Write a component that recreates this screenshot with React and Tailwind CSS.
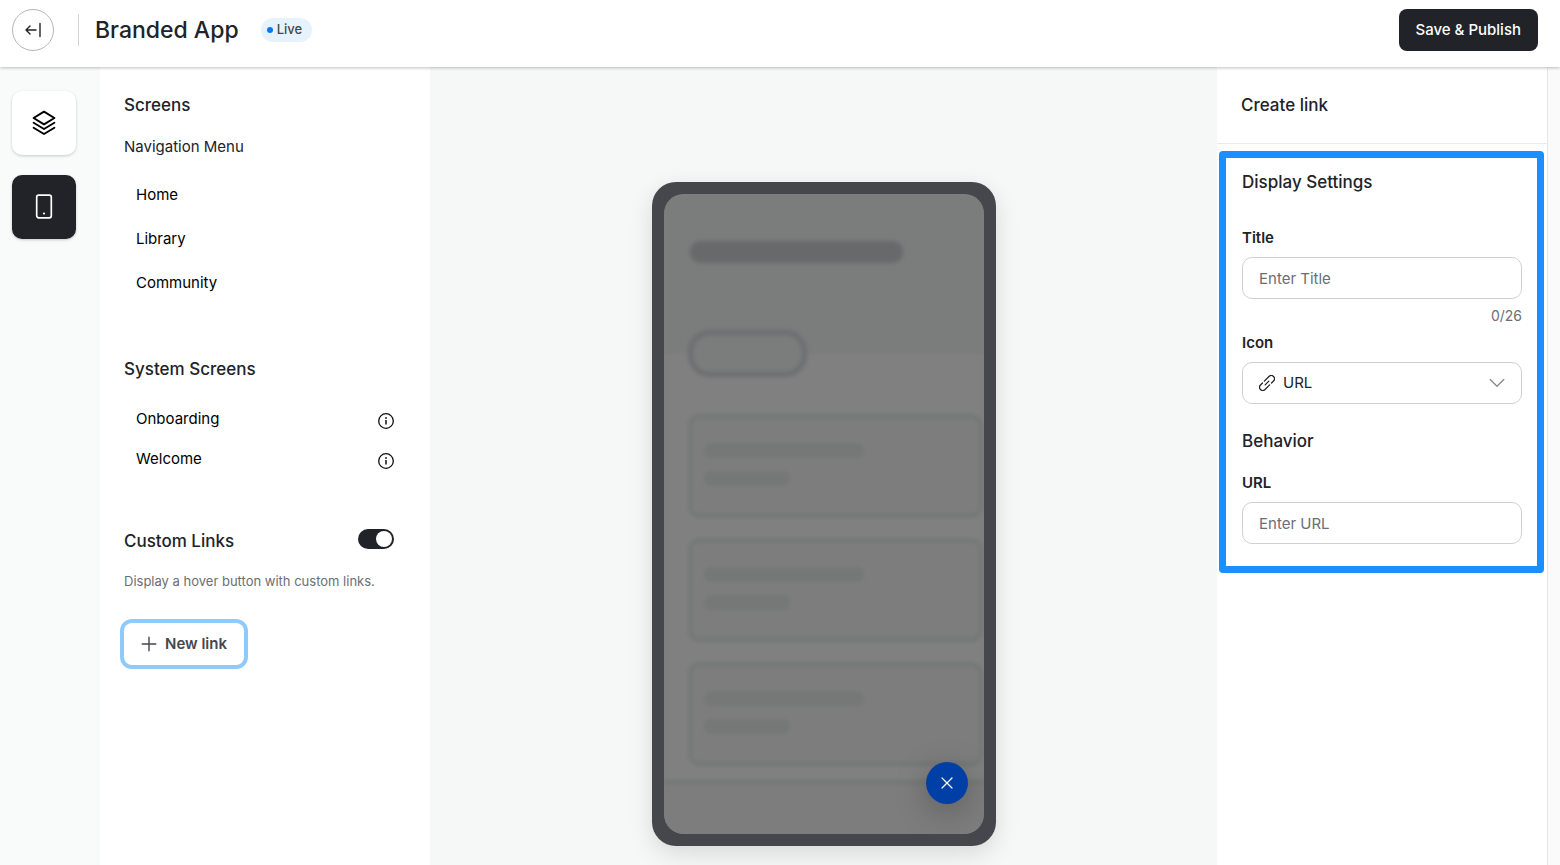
import { useState } from "react";

function ExitIcon() {
  return (
    <svg width="18" height="18" viewBox="0 0 18 18" fill="none" stroke="#212328" strokeWidth="1.4" strokeLinecap="round" strokeLinejoin="round" aria-hidden="true">
      <path d="M12 9H2M6 5 2 9l4 4M16 2.5v13" />
    </svg>
  );
}

function LayersIcon() {
  return (
    <svg width="24" height="26" viewBox="0 0 24 26" fill="none" stroke="#000" strokeWidth="1.9" strokeLinecap="round" strokeLinejoin="round" aria-hidden="true">
      <path d="M12 1.6 22.4 8 12 14.4 1.6 8Z" />
      <path d="M1.6 12.7 12 19l10.4-6.3" />
      <path d="M1.6 17.7 12 24l10.4-6.3" />
    </svg>
  );
}

function PhoneIcon() {
  return (
    <svg width="18" height="26" viewBox="0 0 18 26" fill="none" aria-hidden="true">
      <rect x="1.7" y="1.2" width="14.6" height="22.6" rx="2" stroke="#fff" strokeWidth="1.7" />
      <circle cx="9" cy="19.5" r="1.1" fill="#fff" />
    </svg>
  );
}

function InfoIcon() {
  return (
    <svg width="16" height="16" viewBox="0 0 16 16" fill="none" aria-hidden="true">
      <circle cx="8" cy="8" r="7.3" stroke="#111" strokeWidth="1.3" />
      <path d="M8 7v4.6" stroke="#111" strokeWidth="1.5" />
      <circle cx="8" cy="5" r="0.9" fill="#111" />
    </svg>
  );
}

function PlusIcon() {
  return (
    <svg width="16" height="16" viewBox="0 0 16 16" fill="none" stroke="#45474d" strokeWidth="1.4" strokeLinecap="round" aria-hidden="true">
      <path d="M8 1.2v13.6M1.2 8h13.6" />
    </svg>
  );
}

function LinkIcon() {
  return (
    <svg width="16" height="16" viewBox="0 0 16 16" fill="none" stroke="#212328" strokeWidth="1.3" strokeLinecap="round" strokeLinejoin="round" aria-hidden="true">
      <g transform="translate(8 8) rotate(-45)">
        <path d="M-0.600 -3.200H6a3.200 3.200 0 0 1 0 6.400H3.200" />
        <path d="M0.600 3.200H-6a3.200 3.200 0 0 1 0-6.400H-3.200" />
        <path d="M-2.600 0H2.600" />
      </g>
    </svg>
  );
}

function ChevronIcon() {
  return (
    <svg width="16" height="10" viewBox="0 0 16 10" fill="none" stroke="#868a90" strokeWidth="1.3" strokeLinecap="round" strokeLinejoin="round" aria-hidden="true">
      <path d="M1.2 1.5 8 8.3l6.8-6.8" />
    </svg>
  );
}

function CloseIcon() {
  return (
    <svg width="12" height="12" viewBox="0 0 12 12" fill="none" stroke="#fff" strokeWidth="1.2" strokeLinecap="round" aria-hidden="true">
      <path d="M1 1l10 10M11 1 1 11" />
    </svg>
  );
}

function SectionTitle({ children }) {
  return <h2 className="text-[17px] leading-6 font-medium">{children}</h2>;
}

function Header() {
  return (
    <header className="relative z-10 flex h-[67px] shrink-0 items-start justify-between bg-white pt-[9px] pr-[22px] pl-3 shadow-[0_1px_3px_rgba(0,0,0,0.25)]">
      <div className="flex items-center">
        <button type="button" aria-label="Back" className="flex size-[42px] items-center justify-center rounded-full border border-[#b3b6bf]">
          <ExitIcon />
        </button>
        <span className="ml-6 h-8 w-px bg-[#d0d2d6]" />
        <h1 className="ml-4 text-[23px] leading-8 font-medium">Branded App</h1>
        <span className="ml-[22px] flex h-6 items-center gap-1 rounded-full bg-[#e6f3fd] pr-[10px] pl-[6px] text-[13px] font-medium text-[#45474d]">
          <span className="size-[6px] rounded-full bg-[#0a78f5]" />
          Live
        </span>
      </div>
      <button type="button" className="h-[42px] rounded-lg bg-[#212328] px-[17px] text-[15px] font-medium text-white">
        Save &amp; Publish
      </button>
    </header>
  );
}

function Rail() {
  return (
    <nav aria-label="Sections" className="flex w-[100px] shrink-0 flex-col gap-5 bg-[#f9fbfa] pt-6 pl-3">
      <button type="button" aria-label="Layers" className="flex size-16 items-center justify-center rounded-[10px] bg-white shadow-[0_1px_3px_rgba(0,0,0,0.2)]">
        <LayersIcon />
      </button>
      <button type="button" aria-label="App" className="flex size-16 items-center justify-center rounded-[10px] bg-[#212328] shadow-[0_1px_3px_rgba(0,0,0,0.2)]">
        <PhoneIcon />
      </button>
    </nav>
  );
}

function ScreensPanel() {
  const [enabled, setEnabled] = useState(true);
  return (
    <aside className="flex w-[330px] shrink-0 flex-col items-stretch bg-white px-6 pt-[26px]">
      <SectionTitle>Screens</SectionTitle>
      <h3 className="mt-[18px] text-[15px] leading-6">Navigation Menu</h3>
      <ul className="mt-[14px]">
        {["Home", "Library", "Community"].map((name) => (
          <li key={name} className="flex h-11 items-center px-3">
            <a href="#" className="text-[15px] text-black">{name}</a>
          </li>
        ))}
      </ul>
      <div className="mt-[52px]">
        <SectionTitle>System Screens</SectionTitle>
      </div>
      <ul className="mt-[18px]">
        {["Onboarding", "Welcome"].map((name) => (
          <li key={name} className="flex h-10 items-center justify-between px-3">
            <a href="#" className="text-[15px] text-black">{name}</a>
            <button type="button" aria-label={`About ${name}`} className="mt-1">
              <InfoIcon />
            </button>
          </li>
        ))}
      </ul>
      <div className="mt-[50px] flex items-start justify-between pr-3">
        <SectionTitle>Custom Links</SectionTitle>
        <button
          type="button"
          role="switch"
          aria-checked={enabled}
          aria-label="Custom Links"
          onClick={() => setEnabled(!enabled)}
          className={`flex h-5 w-9 items-center rounded-full p-[2px] ${enabled ? "justify-end bg-[#212328]" : "justify-start bg-[#b3b6bf]"}`}
        >
          <span className="size-4 rounded-full bg-white" />
        </button>
      </div>
      <p className="mt-[18px] text-[13px] leading-5 text-[#6b6e75]">Display a hover button with custom links.</p>
      <button type="button" className="mt-8 flex h-[42px] items-center gap-2 self-start rounded-lg bg-white px-[17px] text-[15px] font-semibold text-[#45474d] ring-4 ring-[#8fcafc]">
        <PlusIcon />
        New link
      </button>
    </aside>
  );
}

function SkeletonCard() {
  return (
    <div className="flex h-[104px] flex-col gap-[13px] rounded-xl border-4 border-[#747776] bg-[#7d7d7d] pt-[25px] pl-3">
      <div className="h-[15px] w-40 rounded-md bg-[#757877]" />
      <div className="h-[15px] w-[86px] rounded-md bg-[#757877]" />
    </div>
  );
}

function Preview() {
  return (
    <main className="flex min-w-0 flex-1 items-start justify-center bg-[#f5f8f7] pt-[115px] pb-[19px]">
      <div className="rounded-3xl bg-[#45474d] p-3 shadow-[0_8px_24px_rgba(0,0,0,0.12)]">
        <div className="relative h-[640px] w-80 overflow-hidden rounded-[20px] bg-[#7e7e7e]">
          <div className="flex h-full flex-col bg-[#808080] blur-[2px]">
            <div className="h-40 shrink-0 bg-[#7b7d7c] pt-[47px] pl-6">
              <div className="ml-[2px] h-[22px] w-[213px] rounded-[10px] bg-[#68696b]" />
              <div className="mt-[67px] h-[47px] w-[119px] rounded-[22px] border-[5px] border-[#6c6d70] bg-[#7b7d7c]" />
            </div>
            <div className="mt-[60px] flex flex-col gap-5 pr-px pl-6">
              <SkeletonCard />
              <SkeletonCard />
              <SkeletonCard />
            </div>
            <div className="mt-[14px] flex-1 border-t-4 border-[#747776] bg-[#7d7d7d]" />
          </div>
          <button type="button" aria-label="Close" className="absolute right-4 bottom-[30px] flex size-[42px] items-center justify-center rounded-full bg-[#003fa5] shadow-[0_8px_32px_rgba(0,0,0,0.25)]">
            <CloseIcon />
          </button>
        </div>
      </div>
    </main>
  );
}

const fieldClass =
  "mt-[7px] h-[42px] w-full rounded-[10px] border border-[#cfd1d5] bg-white px-4 text-[15px] placeholder:text-[#6b6e75]";
const labelClass = "block text-[15px] leading-6 font-semibold";

function LinkPanel() {
  const [title, setTitle] = useState("");
  const [url, setUrl] = useState("");
  return (
    <aside className="w-[330px] shrink-0 bg-white">
      <div className="h-[77px] border-b border-[#e9ebec] px-6 pt-[26px]">
        <SectionTitle>Create link</SectionTitle>
      </div>
      <form className="mt-[7px] mr-[3px] ml-[2px] rounded-[4px] border-[7px] border-[#1b8fff] pt-3 pr-[15px] pb-[22px] pl-4">
        <SectionTitle>Display Settings</SectionTitle>
        <label htmlFor="title" className={`mt-8 ${labelClass}`}>Title</label>
        <input id="title" type="text" placeholder="Enter Title" maxLength={26} value={title} onChange={(e) => setTitle(e.target.value)} className={fieldClass} />
        <p className="mt-[7px] text-right text-[14px] leading-5 text-[#6b6e75]">{title.length}/26</p>
        <label htmlFor="icon" className={`mt-[5px] ${labelClass}`}>Icon</label>
        <div className="relative">
          <select id="icon" className={`${fieldClass} block appearance-none pl-10`}>
            <option>URL</option>
          </select>
          <span className="pointer-events-none absolute bottom-[13px] left-[17px]">
            <LinkIcon />
          </span>
          <span className="pointer-events-none absolute right-[17px] bottom-4">
            <ChevronIcon />
          </span>
        </div>
        <div className="mt-[25px]">
          <SectionTitle>Behavior</SectionTitle>
        </div>
        <label htmlFor="url" className={`mt-[18px] ${labelClass}`}>URL</label>
        <input id="url" type="text" placeholder="Enter URL" value={url} onChange={(e) => setUrl(e.target.value)} className={fieldClass} />
      </form>
    </aside>
  );
}

export default function App() {
  return (
    <div className="flex min-h-screen flex-col bg-white font-[Inter,sans-serif] text-[#212328]">
      <Header />
      <div className="flex flex-1">
        <Rail />
        <ScreensPanel />
        <Preview />
        <LinkPanel />
        <div className="w-[13px] shrink-0 border-l border-[#e5e7e8] bg-[#fafafa]" />
      </div>
    </div>
  );
}
